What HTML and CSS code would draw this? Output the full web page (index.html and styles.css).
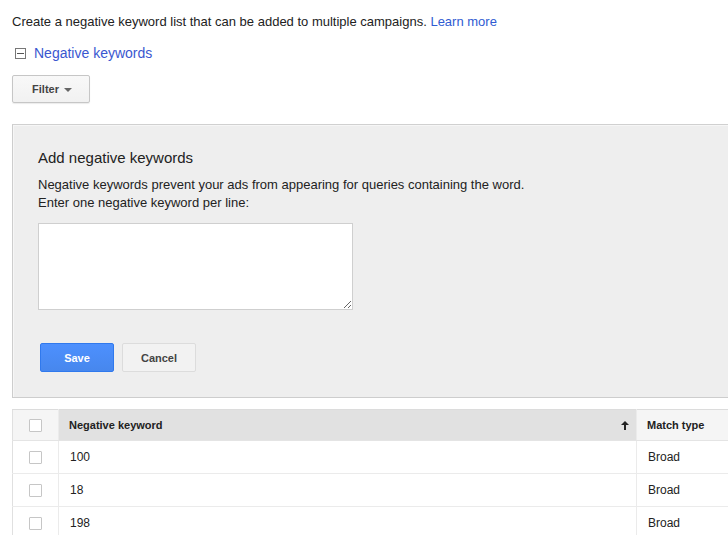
FILE: index.html
```html
<!DOCTYPE html>
<html>
<head>
<meta charset="utf-8">
<link rel="stylesheet" href="styles.css">
</head>
<body>
<div class="page">
  <p class="intro">Create a negative keyword list that can be added to multiple campaigns. <a class="link" href="#">Learn more</a></p>
  <div class="toggle">
    <span class="toggle-box"><span class="toggle-minus"></span></span>
    <a class="toggle-link" href="#">Negative keywords</a>
  </div>
  <button class="btn filter">Filter <span class="caret"></span></button>

  <div class="panel">
    <h2 class="panel-title">Add negative keywords</h2>
    <p class="panel-desc">Negative keywords prevent your ads from appearing for queries containing the word.<br>Enter one negative keyword per line:</p>
    <textarea class="kw-input"></textarea>
    <div class="actions">
      <button class="btn primary">Save</button>
      <button class="btn secondary">Cancel</button>
    </div>
  </div>

  <table class="grid">
    <thead>
      <tr>
        <th class="col-check"><span class="cb"></span></th>
        <th class="col-kw sorted"><div class="th-inner"><span>Negative keyword</span><svg class="sort" width="8" height="9" viewBox="0 0 8 9"><path d="M4 0 L8 4 L5 4 L5 9 L3 9 L3 4 L0 4 Z" fill="#222"/></svg></div></th>
        <th class="col-match">Match type</th>
      </tr>
    </thead>
    <tbody>
      <tr><td class="col-check"><span class="cb"></span></td><td class="col-kw">100</td><td class="col-match">Broad</td></tr>
      <tr><td class="col-check"><span class="cb"></span></td><td class="col-kw">18</td><td class="col-match">Broad</td></tr>
      <tr><td class="col-check"><span class="cb"></span></td><td class="col-kw">198</td><td class="col-match">Broad</td></tr>
    </tbody>
  </table>
</div>
</body>
</html>
```
FILE: styles.css
```css
html, body {
  margin: 0;
  padding: 0;
  background: #fff;
  overflow: hidden;
}
body {
  font-family: "Liberation Sans", Arial, sans-serif;
  color: #222;
  width: 728px;
  height: 535px;
}
.page {
  padding-left: 12px;
  width: 716px;
  overflow: hidden;
}
.intro {
  margin: 14px 0 0;
  font-size: 13px;
  line-height: 16px;
  color: #222;
}
.link {
  color: #2f5bd2;
  text-decoration: none;
}
.toggle {
  display: flex;
  align-items: center;
  margin-top: 14px;
  height: 18px;
}
.toggle-box {
  width: 9px;
  height: 9px;
  border: 1px solid #777;
  margin-left: 3px;
  margin-right: 8px;
  display: flex;
  align-items: center;
  justify-content: center;
}
.toggle-minus {
  width: 7px;
  height: 1px;
  background: #555;
}
.toggle-link {
  font-size: 14px;
  color: #3a57d0;
  text-decoration: none;
  line-height: 18px;
}
.btn {
  font-family: "Liberation Sans", Arial, sans-serif;
  font-weight: bold;
  font-size: 11px;
  border-radius: 2px;
  cursor: pointer;
  padding: 0;
}
.filter {
  display: flex;
  align-items: center;
  justify-content: center;
  gap: 5px;
  margin-top: 13px;
  width: 78px;
  height: 28px;
  border: 1px solid #c6c6c6;
  background: linear-gradient(#f8f8f8, #f1f1f1);
  color: #444;
  box-shadow: 0 1px 1px rgba(0,0,0,0.08);
  padding-left: 2px;
}
.caret {
  width: 0;
  height: 0;
  border-left: 4px solid transparent;
  border-right: 4px solid transparent;
  border-top: 4px solid #666;
  margin-top: 1px;
}
.panel {
  margin-top: 21px;
  width: 800px;
  background: #eeeeee;
  border-top: 1px solid #d0d0d0;
  border-left: 1px solid #cdcdcd;
  border-bottom: 1px solid #cdcdcd;
  box-shadow: inset 1px 1px 0 #f6f6f6;
  padding: 25px 0 24px 25px;
  height: 223px;
}
.panel-title {
  margin: 0;
  font-weight: normal;
  font-size: 15px;
  line-height: 16px;
  color: #222;
}
.panel-desc {
  margin: 10px 0 0;
  font-size: 13px;
  line-height: 18px;
  color: #222;
}
.kw-input {
  display: block;
  margin: 11px 0 0;
  width: 315px;
  height: 87px;
  box-sizing: border-box;
  border: 1px solid #cfcfcf;
  background: #fff;
  resize: both;
  padding: 2px;
}
.actions {
  display: flex;
  gap: 8px;
  margin-top: 33px;
  margin-left: 2px;
}
.primary {
  width: 74px;
  height: 29px;
  background: linear-gradient(#4d90fe, #4787ed);
  border: 1px solid #3079ed;
  color: #fff;
}
.secondary {
  width: 74px;
  height: 29px;
  background: #f2f2f2;
  border: 1px solid #dcdcdc;
  color: #444;
}
.grid {
  margin-top: 11px;
  border-collapse: collapse;
  width: 800px;
  font-size: 12px;
  border-left: 1px solid #e0e0e0;
}
.grid th {
  height: 31px;
  box-sizing: border-box;
  font-size: 11px;
  font-weight: bold;
  text-align: left;
  background: #f5f5f5;
  color: #222;
  border-top: 1px solid #dcdcdc;
  border-bottom: 1px solid #e4e4e4;
  padding: 0 0 0 10px;
}
.grid th.sorted {
  background: #e1e1e1;
}
.grid td {
  height: 33px;
  box-sizing: border-box;
  border-bottom: 1px solid #ebebeb;
  padding: 0 0 0 11px;
  color: #222;
}
.grid .col-check {
  width: 46px;
  padding: 0;
  text-align: center;
  border-right: 1px solid #ebebeb;
}
.grid .col-kw {
  width: 578px;
  border-right: 1px solid #ebebeb;
}
.grid th.col-kw {
  padding-left: 10px;
}
.th-inner {
  display: flex;
  justify-content: space-between;
  align-items: center;
  padding-right: 7px;
}
.sort {
  display: block;
}
.cb {
  display: inline-block;
  width: 11px;
  height: 11px;
  border: 1px solid #c6c6c6;
  border-radius: 1px;
  background: #fff;
  vertical-align: middle;
}
```
